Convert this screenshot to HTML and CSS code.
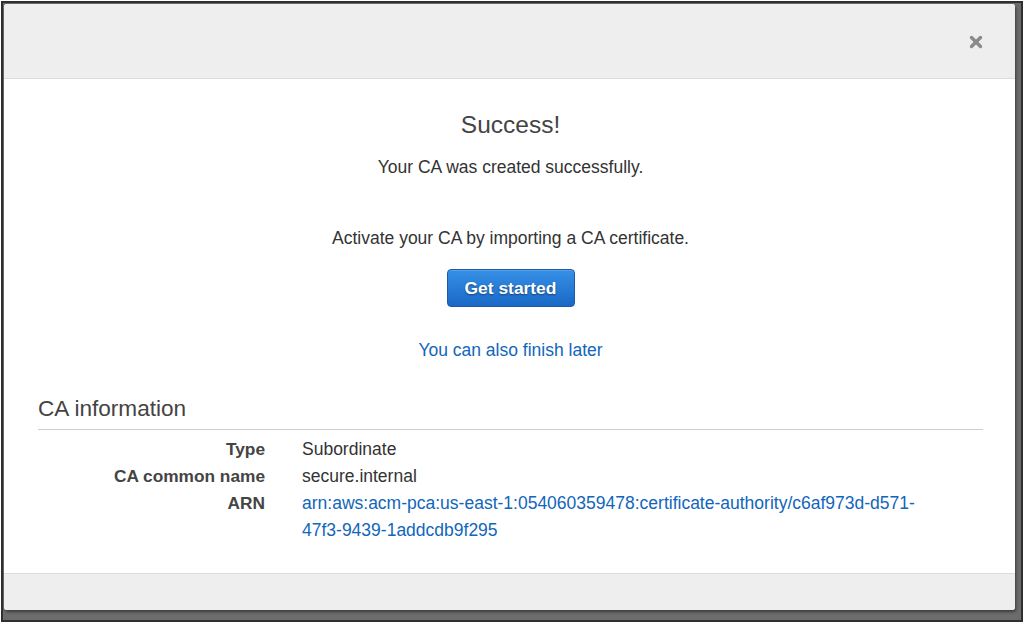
FILE: index.html
```html
<!DOCTYPE html>
<html lang="en">
<head>
<meta charset="utf-8">
<title>Success</title>
<link rel="stylesheet" href="styles.css">
</head>
<body>
<div class="frame">
  <div class="modal">
    <div class="modal-header">
      <button class="close" aria-label="Close">
        <svg width="14" height="14" viewBox="0 0 14 14"><path d="M2.5 2.5 L11.5 11.5 M11.5 2.5 L2.5 11.5" stroke="#8a8a8a" stroke-width="3.4" stroke-linecap="round"/></svg>
      </button>
    </div>
    <div class="modal-body">
      <h2 class="title">Success!</h2>
      <p class="msg">Your CA was created successfully.</p>
      <p class="msg activate">Activate your CA by importing a CA certificate.</p>
      <div class="actions"><button class="btn-primary">Get started</button></div>
      <a class="later" href="#">You can also finish later</a>
      <section class="info">
        <h3 class="info-title">CA information</h3>
        <dl class="info-grid">
          <dt>Type</dt><dd>Subordinate</dd>
          <dt>CA common name</dt><dd>secure.internal</dd>
          <dt>ARN</dt><dd><a href="#">arn:aws:acm-pca:us-east-1:054060359478:certificate-authority/c6af973d-d571-<br>47f3-9439-1addcdb9f295</a></dd>
        </dl>
      </section>
    </div>
    <div class="modal-footer"></div>
  </div>
</div>
</body>
</html>
```

FILE: styles.css
```css
* { box-sizing: border-box; }
html, body { margin: 0; padding: 0; background: #ffffff; }
body {
  font-family: "Liberation Sans", Arial, Helvetica, sans-serif;
  color: #333;
}
.frame {
  margin: 1px 1px 2px 1px;
  height: 621px;
  border: 2px solid #2f2f2f;
  background: #6c6c6c;
  padding: 1px 6px 10px 1px;
  display: flex;
}
.modal {
  flex: 1;
  display: flex;
  flex-direction: column;
  background: #fff;
  border-radius: 3px;
  box-shadow: 1px 2px 3px rgba(0,0,0,0.45);
  overflow: hidden;
}
.modal-header {
  height: 75px;
  background: #eeeeee;
  border-bottom: 1px solid #dcdcdc;
  display: flex;
  align-items: center;
  justify-content: flex-end;
  padding: 2px 32px 0 0;
}
.close {
  border: 0;
  background: transparent;
  padding: 0;
  width: 14px;
  height: 14px;
  display: flex;
  cursor: pointer;
}
.modal-body {
  flex: 1;
  padding: 31px 32px 0 34px;
  text-align: center;
}
.title {
  margin: 0;
  font-size: 24.5px;
  line-height: 30px;
  font-weight: normal;
  color: #444;
}
.msg {
  margin: 15px 0 0;
  font-size: 17.5px;
  line-height: 24px;
  color: #333;
}
.msg.activate { margin-top: 47px; }
.actions { margin-top: 19px; display: flex; justify-content: center; }
.btn-primary {
  width: 128px;
  height: 38px;
  border: 1px solid #1c5aa8;
  border-radius: 4px;
  background: linear-gradient(#3690e6, #1a68c6);
  color: #fff;
  font-family: "Liberation Sans", Arial, sans-serif;
  font-weight: bold;
  font-size: 17.4px;
  text-shadow: 0 1px 2px rgba(0,0,0,0.45);
  box-shadow: inset 0 1px 0 rgba(255,255,255,0.15);
}
.later {
  display: inline-block;
  margin-top: 31px;
  font-size: 17.5px;
  line-height: 24px;
  color: #1166bb;
  text-decoration: none;
}
.info { text-align: left; margin-top: 33px; }
.info-title {
  margin: 0;
  font-size: 22.6px;
  line-height: 28px;
  font-weight: normal;
  color: #444;
  padding-bottom: 6px;
  border-bottom: 1px solid #cfcfcf;
}
.info-grid {
  margin: 6px 0 0;
  display: grid;
  grid-template-columns: 227px 1fr;
  column-gap: 37px;
  font-size: 17.5px;
  line-height: 27px;
}
.info-grid dt {
  text-align: right;
  font-weight: bold;
  font-size: 17.3px;
  color: #444;
}
.info-grid dd { margin: 0; color: #333; }
.info-grid dd a { color: #1166bb; text-decoration: none; }
.modal-footer {
  height: 37px;
  background: #eeeeee;
  border-top: 1px solid #dcdcdc;
}
```
